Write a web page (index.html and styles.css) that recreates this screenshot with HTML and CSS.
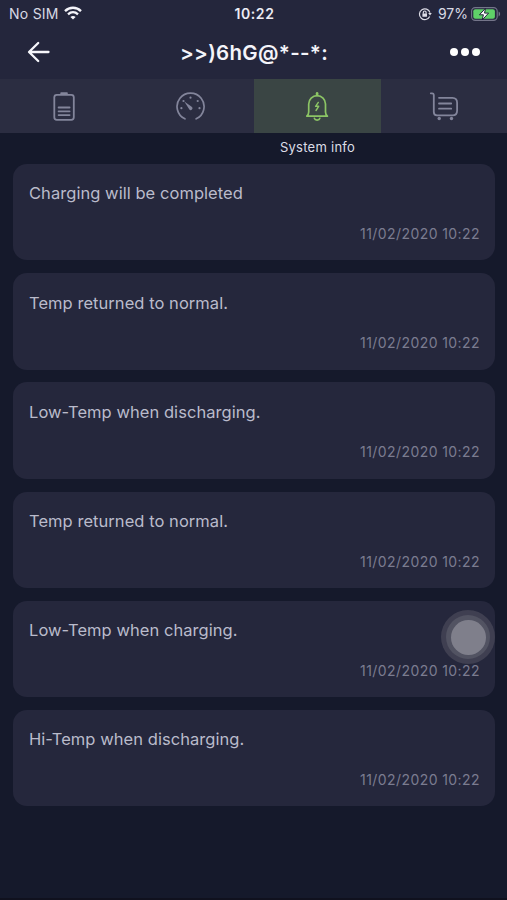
FILE: index.html
```html
<!DOCTYPE html>
<html lang="en">
<head>
<meta charset="utf-8">
<title>System info</title>
<link rel="stylesheet" href="styles.css">
</head>
<body>
<div class="screen">
  <header class="top">
    <div class="status">
      <div class="status-left">
        <span class="carrier">No SIM</span>
        <svg class="wifi" width="18" height="14" viewBox="0 0 18 14" fill="none" stroke="#f4f4fa" stroke-width="2.3">
          <path d="M1 5.1C5.5.6 12.5.6 17 5.1M4 8.3c3-2.8 7-2.8 10 0"/>
          <path d="M9 13.6 6.4 11c1.5-1.3 3.7-1.3 5.2 0z" fill="#f4f4fa" stroke="none"/>
        </svg>
      </div>
      <span class="clock">10:22</span>
      <div class="status-right">
        <svg class="lock" width="14" height="14" viewBox="0 0 14 14" fill="none" stroke="#dcdce6" stroke-width="1.2">
          <path d="M11.7 9.6A5.4 5.4 0 1 1 12 5.6"/>
          <path d="M10.2 6h3.6L12 8.6z" fill="#dcdce6" stroke="none"/>
          <path d="M5.3 6.7V5.4a1.4 1.4 0 0 1 2.8 0v1.3"/>
          <rect x="4.4" y="6.4" width="4.6" height="3.4" rx=".5" fill="#dcdce6" stroke="none"/>
        </svg>
        <span class="percent">97%</span>
        <svg class="power" width="30" height="14" viewBox="0 0 30 14">
          <rect x=".6" y=".6" width="25.6" height="12.8" rx="3.6" fill="none" stroke="#74758a" stroke-width="1.1"/>
          <rect x="2.3" y="2.2" width="21.6" height="9.6" rx="2" fill="#5fd068"/>
          <path d="M27.6 4.6c2 .7 2 4.1 0 4.8z" fill="#74758a"/>
          <path d="M14.6 1.2 8.4 7.8h4L11.2 13l6.4-6.9h-4.1z" fill="#fff" stroke="#24263c" stroke-width="1"/>
        </svg>
      </div>
    </div>
    <div class="nav">
      <svg class="back" width="24" height="22" viewBox="0 0 24 22" fill="none" stroke="#f6f6fb" stroke-width="2.3" stroke-linecap="round" stroke-linejoin="round">
        <path d="M11.2 2 2 11l9.2 9M2.3 11H21.5"/>
      </svg>
      <h1 class="title">&gt;&gt;)6hG@*--*:</h1>
      <svg class="more" width="32" height="10" viewBox="0 0 32 10" fill="#fff">
        <circle cx="5" cy="5" r="4"/><circle cx="16" cy="5" r="4"/><circle cx="27" cy="5" r="4"/>
      </svg>
    </div>
  </header>
  <nav class="tabs">
    <div class="tab">
      <svg width="32" height="32" viewBox="0 0 32 32" fill="none" stroke="#83859b" stroke-width="1.8" stroke-linecap="round">
        <rect x="7.3" y="4.8" width="19.5" height="25" rx="2.5"/>
        <path d="M14.3 3.3h5.5" stroke-width="2.2"/>
        <path d="M11.6 17.5h11M11.6 21.3h11M11.6 25.1h11"/>
      </svg>
    </div>
    <div class="tab">
      <svg width="32" height="32" viewBox="0 0 32 32" fill="none" stroke="#83859b" stroke-width="1.7" stroke-linecap="round">
        <path d="M10.9 28.8A13.5 13.5 0 1 1 22.2 28.8"/>
        <path d="M10.3 11.6 15.2 19.2a1.8 1.8 0 1 0 2.5-2.5z" fill="#83859b" stroke="none"/>
        <g fill="#83859b" stroke="none"><circle cx="16.5" cy="7.7" r="1.1"/><circle cx="23.7" cy="11" r="1.1"/><circle cx="9.5" cy="11" r="1.1"/><circle cx="25.5" cy="18.2" r="1.1"/><circle cx="7.4" cy="18.2" r="1.1"/></g>
      </svg>
    </div>
    <div class="tab active">
      <svg width="32" height="32" viewBox="0 0 32 32" fill="none" stroke="#8cc565" stroke-width="1.7" stroke-linecap="round" stroke-linejoin="round">
        <path d="M5.8 26.2h20.6c-1.4-1.3-1.9-2.4-1.9-4.2v-8a8.4 8.4 0 0 0-16.8 0v8c0 1.8-.5 2.9-1.9 4.2z"/>
        <path d="M16.1 3.3v1.8" stroke-width="2.6"/>
        <path d="M13.4 28.4c.6 2.2 4.8 2.2 5.4 0"/>
        <path d="M17.3 12.4 14.6 16.3h3.1L15 20.5" stroke-width="1.4"/>
      </svg>
    </div>
    <div class="tab last">
      <svg width="32" height="32" viewBox="0 0 32 32" fill="none" stroke="#83859b" stroke-width="1.8" stroke-linecap="round" stroke-linejoin="round">
        <path d="M2.8 3.3h1.4c1 0 1.5.5 1.6 1.5V22c0 2 1.2 3.3 3.2 3.3h15.5c3 0 4.6-1.7 4.6-4.6v-8c0-3-1.6-4.9-4.6-4.9H11"/>
        <path d="M11 13.5h12.2M11 18.7h12.2"/>
        <g fill="#83859b" stroke="none"><circle cx="11.2" cy="28.5" r="1.7"/><circle cx="23.5" cy="28.5" r="1.7"/></g>
      </svg>
    </div>
  </nav>
  <div class="tab-label">System info</div>
  <main class="list">
    <article class="card"><p class="message">Charging will be completed</p><time class="date">11/02/2020 10:22</time></article>
    <article class="card"><p class="message">Temp returned to normal.</p><time class="date">11/02/2020 10:22</time></article>
    <article class="card"><p class="message">Low-Temp when discharging.</p><time class="date">11/02/2020 10:22</time></article>
    <article class="card"><p class="message">Temp returned to normal.</p><time class="date">11/02/2020 10:22</time></article>
    <article class="card"><p class="message">Low-Temp when charging.</p><time class="date">11/02/2020 10:22</time></article>
    <article class="card"><p class="message">Hi-Temp when discharging.</p><time class="date">11/02/2020 10:22</time></article>
  </main>
  <div class="touch"><div class="touch-mid"><div class="touch-core"></div></div></div>
</div>
</body>
</html>
```
FILE: styles.css
```css
* { box-sizing: border-box; }
body { margin: 0; background: #15192b; font-family: Inter, "Liberation Sans", sans-serif; }
h1, p { margin: 0; }
svg { display: block; flex: none; }
.screen { position: relative; width: 507px; height: 900px; overflow: hidden; background: #15192b; border-bottom: 2px solid #10111e; }
.top { height: 79px; background: #24263c; }
.status { display: grid; grid-template-columns: 1fr auto 1fr; align-items: center; height: 27px; padding: 0 6px 0 8px; }
.status-left, .status-right { display: flex; align-items: center; }
.status-right { justify-content: flex-end; }
.carrier { margin-left: 1px; font-size: 14px; color: #d8d9e4; letter-spacing: .25px; }
.wifi { margin-left: 5px; margin-top: -2px; }
.clock { font-size: 14px; font-weight: 600; color: #ececf4; letter-spacing: .6px; }
.percent { margin: 0 3px 0 6px; font-size: 14px; color: #d8d9e4; }
.nav { display: grid; grid-template-columns: 1fr auto 1fr; align-items: center; height: 50px; padding: 0 26px 0 27px; }
.more { justify-self: end; }
.title { padding-top: 2px; font-size: 20.5px; line-height: 24px; font-weight: 600; color: #f4f4fa; letter-spacing: .3px; font-feature-settings: "calt" 0; }
.tabs { display: grid; grid-template-columns: 127px 127px 127px 126px; height: 54px; background: #2b2d41; }
.tab { display: flex; align-items: center; justify-content: center; padding-right: 1px; }
.last { padding-right: 0; }
.active { background: #3a4544; }
.tab-label { width: 127px; height: 31px; margin-left: 254px; padding-top: 5px; font-size: 13px; line-height: 18px; text-align: center; color: #dcdde6; letter-spacing: .25px; }
.list { display: grid; gap: 12.8px; padding: 0 12px 0 13px; }
.card { display: flex; flex-direction: column; justify-content: space-between; height: 96.4px; padding: 18.4px 15px 16.4px 16px; border-radius: 14px; background: #25273c; }
.message { font-size: 16.5px; line-height: 22px; color: #babbcb; letter-spacing: .05px; }
.date { align-self: flex-end; font-size: 14px; line-height: 20px; color: #7b7c90; letter-spacing: .42px; }
.touch { position: absolute; left: 441px; top: 610px; width: 54px; height: 54px; padding: 5px; border-radius: 50%; background: rgba(74, 74, 90, .7); }
.touch-mid { width: 44px; height: 44px; padding: 4.5px; border-radius: 50%; background: #525362; }
.touch-core { width: 35px; height: 35px; border-radius: 50%; background: #7f7f8b; }
```
